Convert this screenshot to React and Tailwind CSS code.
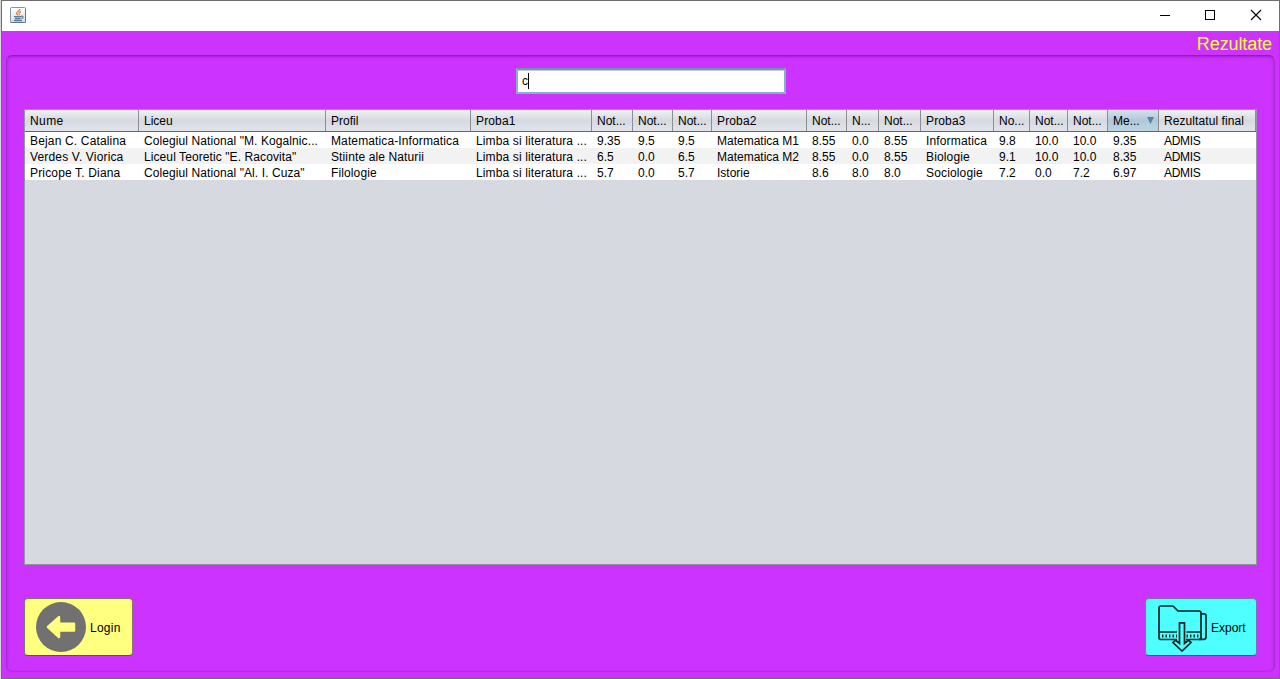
import React from "react";

const columns = [
  { title: "Nume", w: 114, track: "tracking-[0.16px]", headTrack: "tracking-[0.4px]" },
  { title: "Liceu", w: 187, track: "tracking-[0.09px]" },
  { title: "Profil", w: 145, track: "tracking-[0.12px]" },
  { title: "Proba1", w: 121, track: "tracking-[0.13px]", headTrack: "tracking-[0.15px]" },
  { title: "Not...", w: 41 },
  { title: "Not...", w: 40 },
  { title: "Not...", w: 39 },
  { title: "Proba2", w: 95, headTrack: "tracking-[0.15px]" },
  { title: "Not...", w: 40 },
  { title: "N...", w: 32 },
  { title: "Not...", w: 42 },
  { title: "Proba3", w: 73, track: "tracking-[0.15px]", headTrack: "tracking-[0.15px]" },
  { title: "No...", w: 36 },
  { title: "Not...", w: 38 },
  { title: "Not...", w: 40 },
  { title: "Me...", w: 51, sorted: true },
  { title: "Rezultatul final", w: 97, track: "tracking-[-0.3px]", headTrack: "tracking-[0.08px]" },
];

const rows = [
  ["Bejan C. Catalina", 'Colegiul National "M. Kogalnic...', "Matematica-Informatica", "Limba si literatura ...", "9.35", "9.5", "9.5", "Matematica M1", "8.55", "0.0", "8.55", "Informatica", "9.8", "10.0", "10.0", "9.35", "ADMIS"],
  ["Verdes V. Viorica", 'Liceul Teoretic "E. Racovita"', "Stiinte ale Naturii", "Limba si literatura ...", "6.5", "0.0", "6.5", "Matematica M2", "8.55", "0.0", "8.55", "Biologie", "9.1", "10.0", "10.0", "8.35", "ADMIS"],
  ["Pricope T. Diana", 'Colegiul National "Al. I. Cuza"', "Filologie", "Limba si literatura ...", "5.7", "0.0", "5.7", "Istorie", "8.6", "8.0", "8.0", "Sociologie", "7.2", "0.0", "7.2", "6.97", "ADMIS"],
];

function JavaIcon() {
  return (
    <svg width="16" height="16" viewBox="0 0 16 16" fill="none">
      <defs>
        <linearGradient id="tile" x1="0" y1="0" x2="0" y2="1">
          <stop offset="0" stopColor="#ffffff" />
          <stop offset="1" stopColor="#d5dde3" />
        </linearGradient>
      </defs>
      <rect x="0.5" y="0.5" width="15" height="15" rx="1" fill="url(#tile)" stroke="#8596a3" />
      <path d="M0.5 15.500h15M15.500 2v13" stroke="#5d7688" />
      <path d="M10 2.200C9.800 4 6.400 4.600 6.600 6.300C6.700 7.200 7.700 7.600 7.900 8.400" stroke="#e8833a" strokeWidth="1.500" />
      <path d="M11 4.600C9 5.300 8.700 6 9.300 6.800C9.800 7.600 9.300 8 8.800 8.400" stroke="#e8833a" strokeWidth="1.200" />
      <path d="M4 9.600h7.500M5 11.500h5.500M4 13.500h8" stroke="#587b99" strokeWidth="1.300" />
      <path d="M11.200 9.200c2.400-.7 2.400 1.800.2 2.300" stroke="#587b99" strokeWidth="1.200" />
    </svg>
  );
}

function TitleBar() {
  return (
    <div className="flex h-[30px] shrink-0 items-start justify-between bg-white">
      <div className="pt-[6px] pl-[8px]">
        <JavaIcon />
      </div>
      <svg width="119" height="30" viewBox="0 0 119 30" fill="none" stroke="#000" shapeRendering="crispEdges">
        <path d="M0 14.500h10" />
        <rect x="45.500" y="9.500" width="9" height="9" />
        <path d="M91 9l10 10M101 9l-10 10" shapeRendering="auto" strokeWidth="1.100" />
      </svg>
    </div>
  );
}

function ResultsTable() {
  return (
    <div className="flex h-[456px] w-[1233px] flex-col border border-[#9297a1] bg-[#d6d9e0] text-[12px] text-black">
      <div className="flex h-[22px] shrink-0 border-b border-[#626469]">
        {columns.map((c, i) => (
          <div
            key={i}
            style={{ width: c.w }}
            className={
              "flex shrink-0 items-center justify-between border-r border-[#8b8e95] pr-[4px] pl-[5px] leading-[20px] whitespace-nowrap " +
              (c.sorted
                ? "bg-linear-to-b from-[#d3e2ec] via-[#b1c7d6] to-[#bdd5e4]"
                : "bg-linear-to-b from-[#f0f1f4] via-[#d6d9e0] to-[#e1e4ea]")
            }
          >
            <span className={c.headTrack}>{c.title}</span>
            {c.sorted && (
              <svg width="7" height="7" viewBox="0 0 7 7">
                <path d="M0 0h7L3.500 7z" fill="#5581a8" />
              </svg>
            )}
          </div>
        ))}
      </div>
      {rows.map((r, ri) => (
        <div key={ri} className={"flex h-[16px] shrink-0 " + (ri % 2 ? "bg-[#f2f2f2]" : "bg-white")}>
          {r.map((cell, ci) => (
            <div
              key={ci}
              style={{ width: columns[ci].w }}
              className={"shrink-0 pl-[5px] leading-[18px] whitespace-nowrap " + (columns[ci].track || "")}
            >
              {cell}
            </div>
          ))}
        </div>
      ))}
    </div>
  );
}

function BackIcon() {
  return (
    <svg width="50" height="50" viewBox="0 0 50 50">
      <circle cx="25" cy="25" r="25" fill="#717171" />
      <path d="M12 25L23 15.200V21.800H38V28.500H23V35L12 25Z" fill="#ffff80" stroke="#ffff80" strokeWidth="2.500" strokeLinejoin="round" />
    </svg>
  );
}

function ExportIcon() {
  return (
    <svg width="50" height="50" viewBox="0 0 50 50" fill="none" stroke="#0a2424" strokeWidth="1.700" strokeLinejoin="round">
      <path d="M20 37.500H4Q2 37.500 2 35.500V6Q2 4 4 4H15Q16.500 4 17.500 5.500L21 9H42Q44 9 44 11V35.500Q44 37.500 42 37.500H29" />
      <path d="M44 11.800H47Q49 11.800 49 14V35Q49 37.300 47 37.300H42" />
      <path d="M2 30H20M29.500 30H44" />
      <path d="M5 34H20M29.500 34H43" strokeWidth="3" strokeDasharray="1.400 2.100" />
      <path d="M22.500 20.800H27.500V41.500L31.500 38.200L34 40.500L25 49L16 40.500L18.500 38.200L22.500 41.500Z" fill="#4dffff" strokeLinejoin="miter" />
    </svg>
  );
}

export default function App() {
  return (
    <div className="h-[679px] w-[1280px] overflow-hidden border-l border-[#d9d9d9] font-['Liberation_Sans',Arial,sans-serif] antialiased">
      <div className="flex h-[679px] flex-col border border-[#6e6e6e] bg-[#cc33ff]">
        <TitleBar />
        <div className="flex h-[24px] shrink-0 items-center justify-end pt-[2px] pr-[7px] text-[18px] leading-[22px] tracking-[-0.1px] text-[#ffff33]">
          Rezultate
        </div>
        <main className="mx-[4px] flex h-[617px] shrink-0 flex-col rounded-[6px] border border-t-[#8c23b0] border-r-[#aa2ad5] border-b-[#b42de1] border-l-[#a629d0] px-[17px] pt-[12px] shadow-[inset_0_1px_3px_rgba(70,0,100,0.35)]">
          <div className="ml-[492px] flex h-[26px] w-[270px] items-center border-2 border-t-[#7195b5] border-r-[#8aafc9] border-b-[#8aafc9] border-l-[#8aafc9] bg-white pl-[4px] text-[12px] shadow-[inset_0_1px_1px_#c3c5cc]">
            <span>c</span>
            <span className="h-[16px] w-px bg-black" />
          </div>
          <div className="mt-[15px]">
            <ResultsTable />
          </div>
          <div className="mt-[33px] flex w-[1233px] justify-between text-[12px]">
            <button className="flex h-[58px] w-[109px] items-center gap-[4px] rounded-[4px] border border-[#8b7370] border-b-[#5f5048] bg-[#ffff80] pl-[11px]">
              <BackIcon />
              <span className="pt-[2px] tracking-[0.25px]">Login</span>
            </button>
            <button className="flex h-[58px] w-[112px] items-center gap-[4px] rounded-[4px] border border-[#7b72b8] border-b-[#514f90] bg-[#4dffff] pl-[11px]">
              <ExportIcon />
              <span className="pt-[2px]">Export</span>
            </button>
          </div>
        </main>
      </div>
    </div>
  );
}
